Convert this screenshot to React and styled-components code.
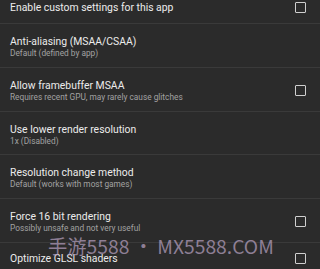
import React from 'react';
import styled, { createGlobalStyle } from 'styled-components';

const GlobalStyle = createGlobalStyle`
  html, body {
    margin: 0;
    padding: 0;
    background: #2b2b2b;
    overflow: hidden;
  }
  body {
    width: 320px;
    height: 269px;
    font-family: Roboto, "Liberation Sans", sans-serif;
  }
`;

const Screen = styled.div`
  position: relative;
  width: 320px;
  height: 269px;
  overflow: hidden;
  background: #2b2b2b;
`;

// list is scrolled a few pixels so the first row is cut off
const List = styled.div`
  margin-top: -8px;
  display: flex;
  flex-direction: column;
`;

const Row = styled.div`
  box-sizing: border-box;
  height: ${p => (p.$single ? '32px' : '43.8px')};
  display: flex;
  align-items: ${p => (p.$single ? 'center' : 'flex-start')};
  padding: ${p => (p.$single ? '0 14px 0 10px' : '11px 14px 0 10px')};
  border-bottom: 1px solid #3a3a3a;
`;

const Texts = styled.div`
  flex: 1;
  display: flex;
  flex-direction: column;
  min-width: 0;
`;

const Title = styled.div`
  font-size: 10.4px;
  line-height: 13px;
  color: #ececec;
  white-space: nowrap;
`;

const Summary = styled.div`
  font-size: 8.3px;
  line-height: 10.5px;
  color: #a2a2a2;
  white-space: nowrap;
`;

const Check = styled.div`
  box-sizing: border-box;
  width: 11px;
  height: 11px;
  border: 1.5px solid #cfcfcf;
  border-radius: 1px;
  flex-shrink: 0;
  align-self: ${p => (p.$single ? 'center' : 'flex-start')};
  margin-top: ${p => (p.$single ? '0' : '6px')};
`;

const Watermark = styled.div`
  position: absolute;
  left: 48px;
  top: 235px;
  font-family: "Noto Sans CJK SC", "Noto Sans", sans-serif;
  font-size: 19.3px;
  line-height: 22px;
  color: rgba(175, 155, 185, 0.75);
  white-space: nowrap;
  pointer-events: none;
`;

const items = [
  { title: 'Enable custom settings for this app', check: true },
  { title: 'Anti-aliasing (MSAA/CSAA)', summary: 'Default (defined by app)' },
  { title: 'Allow framebuffer MSAA', summary: 'Requires recent GPU, may rarely cause glitches', check: true },
  { title: 'Use lower render resolution', summary: '1x (Disabled)' },
  { title: 'Resolution change method', summary: 'Default (works with most games)' },
  { title: 'Force 16 bit rendering', summary: 'Possibly unsafe and not very useful', check: true },
  { title: 'Optimize GLSL shaders', check: true },
];

export default function App() {
  return (
    <>
      <GlobalStyle />
      <Screen>
        <List>
          {items.map(item => {
            const single = !item.summary;
            return (
              <Row key={item.title} $single={single}>
                <Texts>
                  <Title>{item.title}</Title>
                  {item.summary && <Summary>{item.summary}</Summary>}
                </Texts>
                {item.check && <Check $single={single} />}
              </Row>
            );
          })}
        </List>
        <Watermark>手游5588 • MX5588.COM</Watermark>
      </Screen>
    </>
  );
}
